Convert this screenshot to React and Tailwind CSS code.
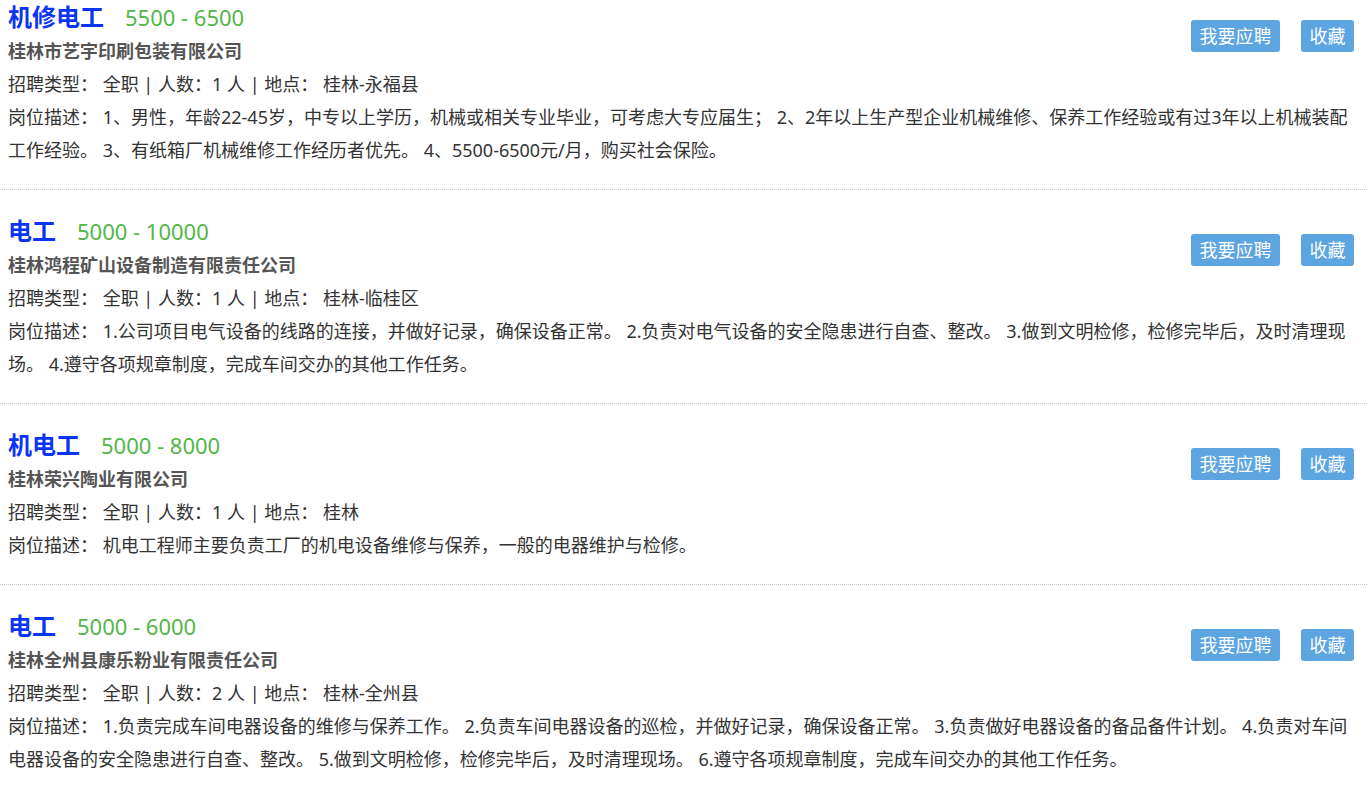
const jobs = [
  {
    title: "机修电工",
    salary: "5500 - 6500",
    company: "桂林市艺宇印刷包装有限公司",
    people: "1",
    place: "桂林-永福县",
    desc: "1、男性，年龄22-45岁，中专以上学历，机械或相关专业毕业，可考虑大专应届生； 2、2年以上生产型企业机械维修、保养工作经验或有过3年以上机械装配工作经验。 3、有纸箱厂机械维修工作经历者优先。 4、5500-6500元/月，购买社会保险。",
  },
  {
    title: "电工",
    salary: "5000 - 10000",
    company: "桂林鸿程矿山设备制造有限责任公司",
    people: "1",
    place: "桂林-临桂区",
    desc: "1.公司项目电气设备的线路的连接，并做好记录，确保设备正常。 2.负责对电气设备的安全隐患进行自查、整改。 3.做到文明检修，检修完毕后，及时清理现场。 4.遵守各项规章制度，完成车间交办的其他工作任务。",
  },
  {
    title: "机电工",
    salary: "5000 - 8000",
    company: "桂林荣兴陶业有限公司",
    people: "1",
    place: "桂林",
    desc: "机电工程师主要负责工厂的机电设备维修与保养，一般的电器维护与检修。",
  },
  {
    title: "电工",
    salary: "5000 - 6000",
    company: "桂林全州县康乐粉业有限责任公司",
    people: "2",
    place: "桂林-全州县",
    desc: "1.负责完成车间电器设备的维修与保养工作。 2.负责车间电器设备的巡检，并做好记录，确保设备正常。 3.负责做好电器设备的备品备件计划。 4.负责对车间电器设备的安全隐患进行自查、整改。 5.做到文明检修，检修完毕后，及时清理现场。 6.遵守各项规章制度，完成车间交办的其他工作任务。",
  },
];

const JobItem = ({ job, first }) => {
  return (
    <div className={`border-b border-dotted border-[#c8c8c8] px-2 pb-[22px] ${first ? "" : "pt-[24px]"}`}>
      <div className="flex items-start justify-between">
        <div>
          <div className="flex h-[34px] items-center">
            <span className="text-[24px] font-bold text-[#0a35f5]">{job.title}</span>
            <span className="ml-[21px] text-[22px] text-[#52b648]">{job.salary}</span>
          </div>
          <div className="h-[34px] text-[18px] font-bold leading-[34px] text-[#555]">{job.company}</div>
        </div>
        <div className="mr-[5px] mt-[20px] flex gap-[21px]">
          <button className="h-[32px] w-[89px] rounded-[3px] bg-[#5da5e1] text-[18px] leading-[32px] text-white">我要应聘</button>
          <button className="h-[32px] w-[53px] rounded-[3px] bg-[#5da5e1] text-[18px] leading-[32px] text-white">收藏</button>
        </div>
      </div>
      <div className="h-[33px] text-[18px] leading-[33px]">
        招聘类型： 全职 | 人数：{job.people} 人 | 地点： {job.place}
      </div>
      <div className="text-[18px] leading-[33px]">岗位描述： {job.desc}</div>
    </div>
  );
};

export default function App() {
  return (
    <div className="h-[787px] overflow-hidden bg-white text-[#333]" style={{ fontFamily: '"Noto Sans", "Noto Sans CJK SC", sans-serif' }}>
      <div className="-mb-[2px] flex h-[2px] justify-end overflow-hidden pr-[14px]">
        <span className="-mt-[14px] text-[16px] leading-[16px] text-[#f0a466]">2019-06</span>
      </div>
      {jobs.map((job, i) => (
        <JobItem key={i} job={job} first={i === 0} />
      ))}
    </div>
  );
}
